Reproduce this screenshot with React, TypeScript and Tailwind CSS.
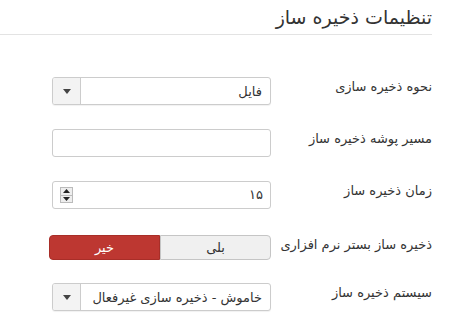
import React from "react";

const font = { fontFamily: "Tahoma, 'DejaVu Sans', sans-serif" };

function Caret() {
  return (
    <svg width="8" height="5" viewBox="0 0 8 5">
      <path d="M0 0h8L4 5z" fill="#444" />
    </svg>
  );
}

function SelectBox({ value }: { value: string }) {
  return (
    <div className="flex h-[28px] w-[219px] overflow-hidden rounded-[3px] border border-[#cccccc] bg-white shadow-[0_1px_1px_rgba(0,0,0,0.06)]">
      <div className="flex-1 whitespace-nowrap px-[8px] pt-[4px] text-[13px] text-[#333]">{value}</div>
      <div className="flex w-[28px] shrink-0 items-center justify-center border-r border-[#cccccc] bg-[#f3f3f3]">
        <Caret />
      </div>
    </div>
  );
}

function Row({ label, children }: { label: string; children: React.ReactNode }) {
  return (
    <div className="flex items-start">
      <label className="w-[146px] shrink-0 whitespace-nowrap text-[13px] text-[#333]">{label}</label>
      <div className="mr-[15px]">{children}</div>
    </div>
  );
}

export default function App() {
  return (
    <div dir="rtl" className="h-[335px] w-[449px] bg-white" style={font}>
      <div className="mr-[17px]">
        <h1 className="border-b border-[#e3e3e3] pb-[4px] pt-[5px] text-[19px] leading-[25px] text-[#333]">
          تنظیمات ذخیره ساز
        </h1>
      </div>
      <div className="mr-[17px] mt-[42px] flex flex-col">
        <Row label="نحوه ذخیره سازی">
          <SelectBox value="فایل" />
        </Row>
        <div className="mt-[24px]">
          <Row label="مسیر پوشه ذخیره ساز">
            <div className="h-[28px] w-[219px] rounded-[3px] border border-[#cccccc] bg-white" />
          </Row>
        </div>
        <div className="mt-[24px]">
          <Row label="زمان ذخیره ساز">
            <div className="flex h-[28px] w-[219px] items-center rounded-[3px] border border-[#cccccc] bg-white px-[7px]">
              <span className="flex-1 text-[13px] text-[#333]">۱۵</span>
              <div className="flex h-[16px] w-[13px] flex-col border border-[#bbb] bg-[#eee]">
                <div className="flex flex-1 items-center justify-center border-b border-[#bbb]">
                  <svg width="7" height="4" viewBox="0 0 7 4">
                    <path d="M0 4h7L3.5 0z" fill="#222" />
                  </svg>
                </div>
                <div className="flex flex-1 items-center justify-center">
                  <svg width="7" height="4" viewBox="0 0 7 4">
                    <path d="M0 0h7L3.5 4z" fill="#222" />
                  </svg>
                </div>
              </div>
            </div>
          </Row>
        </div>
        <div className="mt-[26px]">
          <Row label="ذخیره ساز بستر نرم افزاری">
            <div className="-ml-[2px] flex h-[25px] w-[222px] text-[13px]">
              <div className="flex flex-1 items-center justify-center rounded-r-[4px] border border-[#c5c5c5] bg-[#f0f0f0] text-[#333]">
                بلی
              </div>
              <div className="flex flex-1 items-center justify-center rounded-l-[4px] border border-[#a82e28] bg-[#bd3731] text-white">
                خیر
              </div>
            </div>
          </Row>
        </div>
        <div className="mt-[23px]">
          <Row label="سیستم ذخیره ساز">
            <SelectBox value="خاموش - ذخیره سازی غیرفعال" />
          </Row>
        </div>
      </div>
    </div>
  );
}
